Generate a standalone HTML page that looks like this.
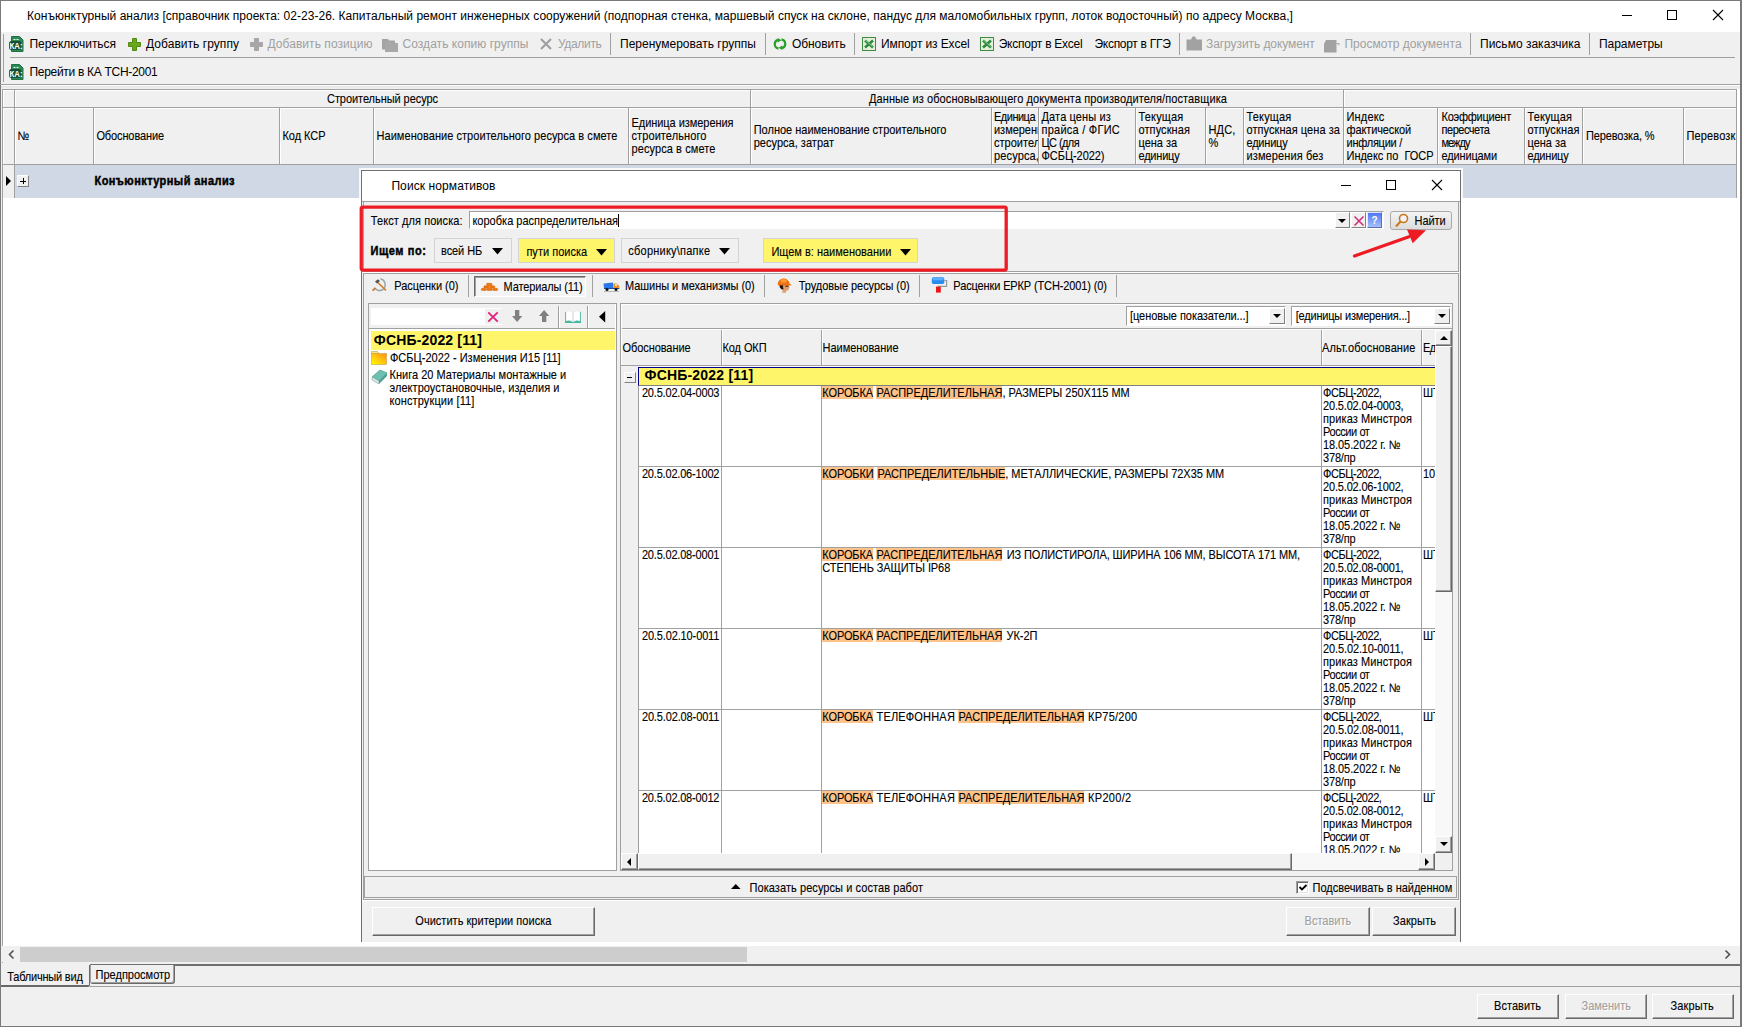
<!DOCTYPE html>
<html lang="ru"><head><meta charset="utf-8"><title>Конъюнктурный анализ</title>
<style>
html,body{margin:0;padding:0}
body{width:1742px;height:1027px;position:relative;overflow:hidden;background:#f0f0f0;font-family:"Liberation Sans",sans-serif;}
.a{position:absolute;box-sizing:border-box}
.t{position:absolute;white-space:pre;line-height:16px;font-size:11px;color:#000}
.m{transform:scaleY(1.1);transform-origin:0 11.81px;-webkit-text-stroke:.1px currentColor}
svg{position:absolute;overflow:visible}
.hl{background:#ffc28c}
.b{-webkit-text-stroke:.4px currentColor}
.d{text-shadow:1px 1px 0 #fff}

</style></head><body>
<div class="a " style="left:0px;top:0px;width:1742px;height:32px;background:#fff;"></div>
<div class="a " style="left:0px;top:0px;width:1742px;height:1px;background:#7a7a7a;"></div>
<div class="a " style="left:0px;top:0px;width:1px;height:1027px;background:#7a7a7a;"></div>
<div class="a " style="left:1740px;top:0px;width:2px;height:1027px;background:#7a7a7a;"></div>
<div class="a " style="left:0px;top:1026px;width:1742px;height:1px;background:#7a7a7a;"></div>
<span class="t " style="left:27px;top:7.84px;font-size:12px;letter-spacing:0.029px;">Конъюнктурный анализ [справочник проекта: 02-23-26. Капитальный ремонт инженерных сооружений (подпорная стенка, маршевый спуск на склоне, пандус для маломобильных групп, лоток водосточный) по адресу Москва,]</span>
<div class="a " style="left:1622px;top:15px;width:10px;height:1px;background:#000;"></div>
<div class="a " style="left:1667px;top:10px;width:10px;height:10px;border:1px solid #000;"></div>
<svg style="left:1713px;top:10px" width="10" height="10"><path d="M0 0L10 10M10 0L0 10" stroke="#000" stroke-width="1.1" fill="none"/></svg>
<div class="a " style="left:3px;top:34px;width:1px;height:48px;background:#a0a0a0;"></div>
<div class="a " style="left:10px;top:57px;width:1725px;height:1px;background:#a0a0a0;"></div>
<div class="a " style="left:0px;top:84px;width:1740px;height:1px;background:#a0a0a0;"></div>
<div class="a " style="left:1px;top:85px;width:1739px;height:1px;background:#fff;"></div>
<div class="a " style="left:1px;top:86px;width:1739px;height:1px;background:#e6e6e6;"></div>
<div class="a " style="left:1px;top:87px;width:1739px;height:1px;background:#ececec;"></div>
<svg style="left:9px;top:36px" width="15" height="16"><path d="M2.5 0.5H10.5L14 4V15.5H2.5Z" fill="#2e8b57" stroke="#207045"/><path d="M4.5 3.5H10.5" stroke="#e8fff0" stroke-width="1" stroke-dasharray="2 1"/><rect x="0" y="5" width="12.5" height="9" rx="2.5" fill="#185030"/><text x="0.5" y="13" font-family="Liberation Sans,sans-serif" font-size="9.5" font-weight="bold" fill="#fff" textLength="13" lengthAdjust="spacingAndGlyphs">КА:</text></svg>
<span class="t " style="left:29.5px;top:36.04px;font-size:12px;letter-spacing:-0.037px;">Переключиться</span>
<svg style="left:127.5px;top:38px" width="13" height="13"><path d="M4.5 0.5h4v4h4v4h-4v4h-4v-4h-4v-4h4z" fill="#6aa61c" stroke="#4d8a10"/></svg>
<span class="t " style="left:146px;top:36.04px;font-size:12px;letter-spacing:0.048px;">Добавить группу</span>
<svg style="left:250px;top:38px" width="13" height="13"><path d="M4.5 0.5h4v4h4v4h-4v4h-4v-4h-4v-4h4z" fill="#a6a6a6" stroke="#a6a6a6"/></svg>
<span class="t " style="left:267.5px;top:36.04px;font-size:12px;color:#a0a0a0;letter-spacing:0.051px;">Добавить позицию</span>
<svg style="left:382px;top:37px" width="16" height="15"><path d="M0 2h6l1 1.5h6v9h-13z" fill="#a4a4a4"/><path d="M3 4.5h6l1 1.5h6v9h-13z" fill="#a8a8a8"/></svg>
<span class="t " style="left:402.5px;top:36.04px;font-size:12px;color:#a0a0a0;letter-spacing:0.046px;">Создать копию группы</span>
<svg style="left:540px;top:38px" width="12" height="12"><path d="M1 1L11 11M11 1L1 11" stroke="#a0a0a0" stroke-width="2.2" fill="none"/></svg>
<span class="t " style="left:558px;top:36.04px;font-size:12px;color:#a0a0a0;letter-spacing:-0.333px;">Удалить</span>
<div class="a " style="left:610px;top:33px;width:1px;height:22px;background:#a0a0a0;"></div>
<span class="t " style="left:620px;top:36.04px;font-size:12px;letter-spacing:0.015px;">Перенумеровать группы</span>
<div class="a " style="left:765px;top:33px;width:1px;height:22px;background:#a0a0a0;"></div>
<svg style="left:773px;top:38px" width="14" height="12" viewBox="0 0 14 12"><path d="M5.5 10.6C0.6 9.6 0.6 3 5 1.9" fill="none" stroke="#2aa02a" stroke-width="2.2"/><path d="M4.6 0L8.6 2.2L4.6 4.6z" fill="#2aa02a"/><path d="M8.5 1.4C13.4 2.4 13.4 9 9 10.1" fill="none" stroke="#2aa02a" stroke-width="2.2"/><path d="M9.4 12L5.4 9.8L9.4 7.4z" fill="#2aa02a"/></svg>
<span class="t " style="left:792px;top:36.04px;font-size:12px;letter-spacing:-0.08px;">Обновить</span>
<div class="a " style="left:854px;top:33px;width:1px;height:22px;background:#a0a0a0;"></div>
<svg style="left:862px;top:37px" width="14" height="14"><rect x="0.5" y="0.5" width="13" height="13" fill="#e4efdc" stroke="#3f8a3f"/><path d="M3 3.5L11 10.5M11 3.5L3 10.5" stroke="#2e8b3e" stroke-width="2.6"/><path d="M3.5 3.2L10.5 9.5" stroke="#bfe6bf" stroke-width=".7"/></svg>
<span class="t " style="left:881px;top:36.04px;font-size:12px;letter-spacing:-0.111px;">Импорт из Excel</span>
<svg style="left:980px;top:37px" width="14" height="14"><rect x="0.5" y="0.5" width="13" height="13" fill="#e4efdc" stroke="#3f8a3f"/><path d="M3 3.5L11 10.5M11 3.5L3 10.5" stroke="#2e8b3e" stroke-width="2.6"/><path d="M3.5 3.2L10.5 9.5" stroke="#bfe6bf" stroke-width=".7"/></svg>
<span class="t " style="left:998.7px;top:36.04px;font-size:12px;letter-spacing:-0.246px;">Экспорт в Excel</span>
<span class="t " style="left:1094.5px;top:36.04px;font-size:12px;letter-spacing:-0.29px;">Экспорт в ГГЭ</span>
<div class="a " style="left:1179px;top:33px;width:1px;height:22px;background:#a0a0a0;"></div>
<svg style="left:1186px;top:36px" width="16" height="15"><path d="M0.5 3.5h4.5l1.5-3h2.5l1.5 3h5.5v11h-15.5z" fill="#a2a2a2"/></svg>
<span class="t " style="left:1206px;top:36.04px;font-size:12px;color:#a0a0a0;letter-spacing:-0.073px;">Загрузить документ</span>
<svg style="left:1324px;top:39.5px" width="17" height="13"><path d="M2 0h10.5v12.5h-12.5v-8.5z" fill="#a2a2a2"/><path d="M12.5 3.5h2.5v2" stroke="#a2a2a2" fill="none"/></svg>
<span class="t " style="left:1344.4px;top:36.04px;font-size:12px;color:#a0a0a0;letter-spacing:0.03px;">Просмотр документа</span>
<div class="a " style="left:1470px;top:33px;width:1px;height:22px;background:#a0a0a0;"></div>
<span class="t " style="left:1480px;top:36.04px;font-size:12px;letter-spacing:0.012px;">Письмо заказчика</span>
<div class="a " style="left:1589px;top:33px;width:1px;height:22px;background:#a0a0a0;"></div>
<span class="t " style="left:1599px;top:36.04px;font-size:12px;letter-spacing:-0.041px;">Параметры</span>
<svg style="left:9px;top:64px" width="15" height="16"><path d="M2.5 0.5H10.5L14 4V15.5H2.5Z" fill="#2e8b57" stroke="#207045"/><path d="M4.5 3.5H10.5" stroke="#e8fff0" stroke-width="1" stroke-dasharray="2 1"/><rect x="0" y="5" width="12.5" height="9" rx="2.5" fill="#185030"/><text x="0.5" y="13" font-family="Liberation Sans,sans-serif" font-size="9.5" font-weight="bold" fill="#fff" textLength="13" lengthAdjust="spacingAndGlyphs">КА:</text></svg>
<span class="t " style="left:29.5px;top:64.14px;font-size:12px;letter-spacing:-0.299px;">Перейти в КА ТСН-2001</span>
<div class="a " style="left:2px;top:89px;width:1738px;height:857px;background:#fff;"></div>
<div class="a " style="left:2px;top:89px;width:1735px;height:76px;background:#f0f0f0;"></div>
<div class="a " style="left:3px;top:90px;width:1733px;height:1px;background:#fff;"></div>
<div class="a " style="left:3px;top:108px;width:1733px;height:1px;background:#fff;"></div>
<div class="a " style="left:3px;top:90px;width:1px;height:75px;background:#fff;"></div>
<div class="a " style="left:15px;top:90px;width:1px;height:75px;background:#fff;"></div>
<div class="a " style="left:751px;top:90px;width:1px;height:74px;background:#fff;"></div>
<div class="a " style="left:1344px;top:90px;width:1px;height:74px;background:#fff;"></div>
<div class="a " style="left:94px;top:108px;width:1px;height:56px;background:#fff;"></div>
<div class="a " style="left:280px;top:108px;width:1px;height:56px;background:#fff;"></div>
<div class="a " style="left:374px;top:108px;width:1px;height:56px;background:#fff;"></div>
<div class="a " style="left:629px;top:108px;width:1px;height:56px;background:#fff;"></div>
<div class="a " style="left:992px;top:108px;width:1px;height:56px;background:#fff;"></div>
<div class="a " style="left:1039px;top:108px;width:1px;height:56px;background:#fff;"></div>
<div class="a " style="left:1136px;top:108px;width:1px;height:56px;background:#fff;"></div>
<div class="a " style="left:1206px;top:108px;width:1px;height:56px;background:#fff;"></div>
<div class="a " style="left:1244px;top:108px;width:1px;height:56px;background:#fff;"></div>
<div class="a " style="left:1438px;top:108px;width:1px;height:56px;background:#fff;"></div>
<div class="a " style="left:1525px;top:108px;width:1px;height:56px;background:#fff;"></div>
<div class="a " style="left:1583px;top:108px;width:1px;height:56px;background:#fff;"></div>
<div class="a " style="left:1684px;top:108px;width:1px;height:56px;background:#fff;"></div>
<div class="a " style="left:2px;top:89px;width:1735px;height:1px;background:#a0a0a0;"></div>
<div class="a " style="left:2px;top:89px;width:1px;height:874px;background:#a0a0a0;"></div>
<div class="a " style="left:3px;top:107px;width:1733px;height:1px;background:#a0a0a0;"></div>
<div class="a " style="left:3px;top:164px;width:1733px;height:1px;background:#a0a0a0;"></div>
<div class="a " style="left:14px;top:90px;width:1px;height:108px;background:#a0a0a0;"></div>
<div class="a " style="left:750px;top:90px;width:1px;height:75px;background:#a0a0a0;"></div>
<div class="a " style="left:1343px;top:90px;width:1px;height:75px;background:#a0a0a0;"></div>
<div class="a " style="left:93px;top:108px;width:1px;height:57px;background:#a0a0a0;"></div>
<div class="a " style="left:279px;top:108px;width:1px;height:57px;background:#a0a0a0;"></div>
<div class="a " style="left:373px;top:108px;width:1px;height:57px;background:#a0a0a0;"></div>
<div class="a " style="left:628px;top:108px;width:1px;height:57px;background:#a0a0a0;"></div>
<div class="a " style="left:991px;top:108px;width:1px;height:57px;background:#a0a0a0;"></div>
<div class="a " style="left:1038px;top:108px;width:1px;height:57px;background:#a0a0a0;"></div>
<div class="a " style="left:1135px;top:108px;width:1px;height:57px;background:#a0a0a0;"></div>
<div class="a " style="left:1205px;top:108px;width:1px;height:57px;background:#a0a0a0;"></div>
<div class="a " style="left:1243px;top:108px;width:1px;height:57px;background:#a0a0a0;"></div>
<div class="a " style="left:1437px;top:108px;width:1px;height:57px;background:#a0a0a0;"></div>
<div class="a " style="left:1524px;top:108px;width:1px;height:57px;background:#a0a0a0;"></div>
<div class="a " style="left:1582px;top:108px;width:1px;height:57px;background:#a0a0a0;"></div>
<div class="a " style="left:1683px;top:108px;width:1px;height:57px;background:#a0a0a0;"></div>
<div class="a " style="left:1736px;top:89px;width:1px;height:109px;background:#a0a0a0;"></div>
<div class="a " style="left:15px;top:165px;width:1721px;height:33px;background:#d0d7e5;"></div>
<div class="a " style="left:3px;top:165px;width:11px;height:33px;background:#f0f0f0;"></div>
<span class="t m" style="left:327px;top:91.19px;letter-spacing:-0.058px;">Строительный ресурс</span>
<span class="t m" style="left:869px;top:91.19px;letter-spacing:0.096px;">Данные из обосновывающего документа производителя/поставщика</span>
<span class="t m" style="left:17.5px;top:128.19px;letter-spacing:-0.812px;">№</span>
<span class="t m" style="left:96.4px;top:128.19px;letter-spacing:-0.113px;">Обоснование</span>
<span class="t m" style="left:282.5px;top:128.19px;letter-spacing:-0.047px;">Код КСР</span>
<span class="t m" style="left:376.5px;top:128.19px;letter-spacing:0.051px;">Наименование строительного ресурса в смете</span>
<span class="t m" style="left:631.5px;top:115.19px;letter-spacing:-0.051px;">Единица измерения</span>
<span class="t m" style="left:631.5px;top:128.19px;letter-spacing:0.09px;">строительного</span>
<span class="t m" style="left:631.5px;top:141.19px;letter-spacing:0.09px;">ресурса в смете</span>
<span class="t m" style="left:753.7px;top:122.19px;letter-spacing:-0.004px;">Полное наименование строительного</span>
<span class="t m" style="left:753.7px;top:135.19px;letter-spacing:0.023px;">ресурса, затрат</span>
<div class="a" style="left:992px;top:108px;width:46px;height:56px;overflow:hidden">
<span class="t m" style="left:2px;top:1.19px;letter-spacing:-0.507px;">Единица</span>
<span class="t m" style="left:2px;top:14.19px;letter-spacing:-0.031px;">измерения</span>
<span class="t m" style="left:2px;top:27.19px;letter-spacing:0.013px;">строительного</span>
<span class="t m" style="left:2px;top:40.19px;letter-spacing:0.137px;">ресурса,</span>
</div>
<span class="t m" style="left:1041.5px;top:109.19px;letter-spacing:0.13px;">Дата цены из</span>
<span class="t m" style="left:1041.5px;top:122.19px;letter-spacing:0.246px;">прайса / ФГИС</span>
<span class="t m" style="left:1041.5px;top:135.19px;letter-spacing:-0.585px;">ЦС (для</span>
<span class="t m" style="left:1041.5px;top:148.19px;letter-spacing:-0.047px;">ФСБЦ-2022)</span>
<span class="t m" style="left:1138.5px;top:109.19px;letter-spacing:0.174px;">Текущая</span>
<span class="t m" style="left:1138.5px;top:122.19px;letter-spacing:0.087px;">отпускная</span>
<span class="t m" style="left:1138.5px;top:135.19px;letter-spacing:-0.031px;">цена за</span>
<span class="t m" style="left:1138.5px;top:148.19px;letter-spacing:-0.21px;">единицу</span>
<span class="t m" style="left:1208.5px;top:122.19px;letter-spacing:0.148px;">НДС,</span>
<span class="t m" style="left:1208.5px;top:135.19px;letter-spacing:-0.281px;">%</span>
<span class="t m" style="left:1246.5px;top:109.19px;letter-spacing:0.174px;">Текущая</span>
<span class="t m" style="left:1246.5px;top:122.19px;letter-spacing:0.061px;">отпускная цена за</span>
<span class="t m" style="left:1246.5px;top:135.19px;letter-spacing:-0.21px;">единицу</span>
<span class="t m" style="left:1246.5px;top:148.19px;letter-spacing:0.12px;">измерения без</span>
<span class="t m" style="left:1346.5px;top:109.19px;letter-spacing:0.174px;">Индекс</span>
<span class="t m" style="left:1346.5px;top:122.19px;letter-spacing:-0.122px;">фактической</span>
<span class="t m" style="left:1346.5px;top:135.19px;letter-spacing:-0.261px;">инфляции /</span>
<span class="t m" style="left:1346.5px;top:148.19px;letter-spacing:-0.025px;">Индекс по  ГОСР</span>
<span class="t m" style="left:1441.5px;top:109.19px;letter-spacing:-0.233px;">Коэффициент</span>
<span class="t m" style="left:1441.5px;top:122.19px;letter-spacing:-0.467px;">пересчета</span>
<span class="t m" style="left:1441.5px;top:135.19px;letter-spacing:-0.969px;">между</span>
<span class="t m" style="left:1441.5px;top:148.19px;letter-spacing:-0.144px;">единицами</span>
<span class="t m" style="left:1527.5px;top:109.19px;letter-spacing:0.103px;">Текущая</span>
<span class="t m" style="left:1527.5px;top:122.19px;letter-spacing:0.142px;">отпускная</span>
<span class="t m" style="left:1527.5px;top:135.19px;letter-spacing:-0.031px;">цена за</span>
<span class="t m" style="left:1527.5px;top:148.19px;letter-spacing:-0.21px;">единицу</span>
<span class="t m" style="left:1586px;top:128.19px;letter-spacing:-0.133px;">Перевозка, %</span>
<div class="a" style="left:1684px;top:108px;width:52px;height:56px;overflow:hidden">
<span class="t m" style="left:2.5px;top:20.19px;letter-spacing:0.144px;">Перевозка</span>
</div>
<svg style="left:6px;top:176px" width="6" height="10"><path d="M0 0L5 5L0 10z" fill="#000"/></svg>
<div class="a " style="left:17px;top:175px;width:12px;height:12px;background:#f0f0f0;border:1px solid;border-color:#fff #808080 #808080 #fff;"></div>
<div class="a " style="left:20px;top:180.5px;width:6px;height:1px;background:#000;"></div>
<div class="a " style="left:22.5px;top:178px;width:1px;height:6px;background:#000;"></div>
<span class="t m b" style="left:94.5px;top:173.19px;font-weight:bold;letter-spacing:0.427px;">Конъюнктурный анализ</span>
<div class="a " style="left:2px;top:946px;width:1738px;height:16px;background:#f0f0f0;"></div>
<div class="a " style="left:20px;top:947px;width:727px;height:15px;background:#cdcdcd;"></div>
<svg style="left:8px;top:950px" width="7" height="9"><path d="M5.5 0.5L1.5 4.5L5.5 8.5" stroke="#505050" stroke-width="1.6" fill="none"/></svg>
<svg style="left:1724px;top:950px" width="7" height="9"><path d="M1.5 0.5L5.5 4.5L1.5 8.5" stroke="#505050" stroke-width="1.6" fill="none"/></svg>
<div class="a " style="left:90px;top:964px;width:1650px;height:2px;background:#707070;"></div>
<div class="a " style="left:90px;top:986px;width:1650px;height:1px;background:#a0a0a0;"></div>
<div class="a " style="left:1px;top:965px;width:89px;height:22px;background:#f0f0f0;border-right:1px solid #696969;border-bottom:2px solid #696969;border-radius:0 0 2px 0;"></div>
<span class="t m" style="left:7.2px;top:968.59px;letter-spacing:-0.195px;">Табличный вид</span>
<div class="a " style="left:90px;top:965px;width:85px;height:19px;background:#f0f0f0;border:1px solid #696969;border-top:none;border-left-color:#a0a0a0;border-radius:0 0 3px 3px;box-shadow:inset -1px -1px 0 #a0a0a0;"></div>
<span class="t m" style="left:95.6px;top:967.19px;letter-spacing:-0.001px;">Предпросмотр</span>
<div class="a " style="left:1477px;top:994px;width:82px;height:25px;background:#f0f0f0;border:1px solid;border-color:#fff #696969 #696969 #fff;box-shadow:inset -1px -1px 0 #a0a0a0;"></div>
<span class="t m" style="left:1494px;top:998.19px;letter-spacing:0.045px;">Вставить</span>
<div class="a " style="left:1565px;top:994px;width:82px;height:25px;background:#f0f0f0;border:1px solid;border-color:#fff #696969 #696969 #fff;box-shadow:inset -1px -1px 0 #a0a0a0;"></div>
<span class="t m d" style="left:1581.5px;top:998.19px;color:#a0a0a0;letter-spacing:0.008px;">Заменить</span>
<div class="a " style="left:1652px;top:994px;width:82px;height:25px;background:#f0f0f0;border:1px solid;border-color:#fff #696969 #696969 #fff;box-shadow:inset -1px -1px 0 #a0a0a0;"></div>
<span class="t m" style="left:1670.5px;top:998.19px;letter-spacing:0.161px;">Закрыть</span>
<div class="a " style="left:359px;top:168px;width:1104px;height:775px;background:#fff;opacity:.85;"></div>
<div class="a " style="left:361px;top:170px;width:1100px;height:772px;background:#f0f0f0;border:1px solid #707070;border-bottom:none;"></div>
<div class="a " style="left:362px;top:171px;width:1098px;height:30px;background:#fff;"></div>
<span class="t " style="left:391.4px;top:177.54px;font-size:12px;letter-spacing:0.093px;">Поиск нормативов</span>
<div class="a " style="left:1341px;top:185px;width:10px;height:1px;background:#000;"></div>
<div class="a " style="left:1386px;top:180px;width:10px;height:10px;border:1px solid #000;"></div>
<svg style="left:1432px;top:180px" width="10" height="10"><path d="M0 0L10 10M10 0L0 10" stroke="#000" stroke-width="1.1" fill="none"/></svg>
<div class="a " style="left:362px;top:201px;width:1098px;height:1px;background:#a0a0a0;"></div>
<div class="a " style="left:363px;top:202px;width:1096px;height:70px;border:1px solid #a0a0a0;border-top:none;"></div>
<div class="a " style="left:363px;top:272px;width:1096px;height:1px;background:#fff;"></div>
<span class="t m" style="left:370.8px;top:213.19px;letter-spacing:0.074px;">Текст для поиска:</span>
<div class="a " style="left:469px;top:211px;width:915px;height:18px;background:#fff;border:1px solid;border-color:#a0a0a0 #fff #fff #a0a0a0;"></div>
<span class="t m" style="left:472.4px;top:213.19px;letter-spacing:0.016px;">коробка распределительная</span>
<div class="a " style="left:618px;top:214px;width:1px;height:13px;background:#000;"></div>
<div class="a " style="left:1335px;top:212px;width:15px;height:16px;background:#f0f0f0;border:1px solid;border-color:#fff #808080 #808080 #fff;"></div>
<svg style="left:1338px;top:219px" width="8" height="4"><path d="M0 0h8l-4 4z" fill="#000"/></svg>
<div class="a " style="left:1351px;top:212px;width:15px;height:16px;background:#f0f0f0;border:1px solid;border-color:#fff #808080 #808080 #fff;"></div>
<svg style="left:1354px;top:216px" width="10" height="10"><path d="M0.5 0.5L9.5 9.5M9.5 0.5L0.5 9.5" stroke="#d0307a" stroke-width="1.6" fill="none"/></svg>
<div class="a " style="left:1367px;top:212px;width:15px;height:16px;background:linear-gradient(180deg,#4f77f5,#a9c0fa);border:1px solid;border-color:#dfe8ff #5a6fb0 #5a6fb0 #dfe8ff;"></div>
<span class="t " style="left:1371.5px;top:213.03px;font-size:10px;font-weight:bold;color:#fff;">?</span>
<div class="a " style="left:1390px;top:211px;width:62px;height:19px;background:linear-gradient(180deg,#f4f4f4,#dcdcdc);border:1px solid #a9a9a9;border-radius:3px;"></div>
<svg style="left:1395px;top:213px" width="14" height="15"><circle cx="8.5" cy="5.5" r="4" fill="#f4f4ff" stroke="#c87818" stroke-width="1.6"/><path d="M5.5 8.5L1 13.5" stroke="#c87818" stroke-width="2"/></svg>
<span class="t m" style="left:1414.5px;top:213.19px;letter-spacing:-0.058px;">Найти</span>
<span class="t m b" style="left:370.4px;top:243.19px;font-weight:bold;letter-spacing:0.589px;">Ищем по:</span>
<div class="a " style="left:434px;top:238px;width:78px;height:25px;background:#f0f0f0;border:1px solid #d4d4d4;"></div>
<span class="t m" style="left:441px;top:243.19px;letter-spacing:-0.072px;">всей НБ</span>
<svg style="left:492.3px;top:248px" width="11" height="7"><path d="M0 0h11l-5.5 6.5z" fill="#000"/></svg>
<div class="a " style="left:518px;top:238px;width:97px;height:25px;background:#fff56a;border:1px solid #d4d4d4;"></div>
<span class="t m" style="left:526.4px;top:244.19px;letter-spacing:0.019px;">пути поиска</span>
<svg style="left:596.2px;top:249px" width="11" height="7"><path d="M0 0h11l-5.5 6.5z" fill="#000"/></svg>
<div class="a " style="left:621px;top:238px;width:118px;height:25px;background:#f0f0f0;border:1px solid #d4d4d4;"></div>
<span class="t m" style="left:628.3px;top:243.19px;letter-spacing:0.225px;">сборнику\папке</span>
<svg style="left:718.8px;top:248px" width="11" height="7"><path d="M0 0h11l-5.5 6.5z" fill="#000"/></svg>
<div class="a " style="left:763px;top:238px;width:155px;height:25px;background:#fff56a;border:1px solid #d4d4d4;"></div>
<span class="t m" style="left:771.4px;top:244.19px;letter-spacing:-0.002px;">Ищем в: наименовании</span>
<svg style="left:899.8px;top:249px" width="11" height="7"><path d="M0 0h11l-5.5 6.5z" fill="#000"/></svg>
<svg style="left:355px;top:200px" width="660" height="80"><rect x="6.25" y="7.05" width="644.95" height="63" rx="1.5" fill="none" stroke="#ed1c24" stroke-width="3.3"/></svg>
<svg style="left:1340px;top:225px" width="100" height="40"><path d="M14.5 31L69 11.7" stroke="#ed1c24" stroke-width="3.2" stroke-linecap="round"/><path d="M86 5.2L67 4.5L72.7 18.2z" fill="#ed1c24"/></svg>
<div class="a " style="left:363px;top:273px;width:1096px;height:26px;border:1px solid #a0a0a0;border-bottom:none;"></div>
<span class="t m" style="left:394.3px;top:278.19px;letter-spacing:-0.027px;">Расценки (0)</span>
<div class="a " style="left:468px;top:275px;width:1px;height:22px;background:#a0a0a0;"></div>
<div class="a " style="left:474px;top:275.5px;width:112px;height:21px;background:#f4f4f4;border:1px solid;border-color:#696969 #fff #fff #696969;box-shadow:inset 1px 1px 0 #a0a0a0;"></div>
<span class="t m" style="left:503.6px;top:279.19px;letter-spacing:-0.129px;">Материалы (11)</span>
<div class="a " style="left:591.5px;top:275px;width:1px;height:22px;background:#a0a0a0;"></div>
<span class="t m" style="left:625px;top:278.19px;letter-spacing:-0.049px;">Машины и механизмы (0)</span>
<div class="a " style="left:764px;top:275px;width:1px;height:22px;background:#a0a0a0;"></div>
<span class="t m" style="left:798.7px;top:278.19px;letter-spacing:-0.041px;">Трудовые ресурсы (0)</span>
<div class="a " style="left:919px;top:275px;width:1px;height:22px;background:#a0a0a0;"></div>
<span class="t m" style="left:953.3px;top:278.19px;letter-spacing:-0.126px;">Расценки ЕРКР (ТСН-2001) (0)</span>
<div class="a " style="left:1116px;top:275px;width:1px;height:22px;background:#a0a0a0;"></div>
<div class="a " style="left:363px;top:299px;width:1px;height:601px;background:#a0a0a0;"></div>
<div class="a " style="left:1458px;top:299px;width:1px;height:601px;background:#a0a0a0;"></div>
<div class="a " style="left:368px;top:303px;width:249px;height:568px;background:#fff;border:1px solid #a0a0a0;"></div>
<div class="a " style="left:369px;top:304px;width:246px;height:24px;background:#f0f0f0;"></div>
<div class="a " style="left:369px;top:328px;width:246px;height:1px;background:#a0a0a0;"></div>
<div class="a " style="left:371px;top:308px;width:131px;height:17px;background:#fff;"></div>
<div class="a " style="left:485px;top:309px;width:17px;height:15px;background:#f0f0f0;"></div>
<svg style="left:488px;top:312px" width="10" height="10"><path d="M0.3 0.3L9.7 9.7M9.7 0.3L0.3 9.7" stroke="#e0207a" stroke-width="1.8" fill="none"/></svg>
<svg style="left:512px;top:310px" width="10" height="12"><path d="M3 0h4.3v6h3l-5.2 6l-5.1-6h3z" fill="#808080"/></svg>
<svg style="left:539px;top:310px" width="10" height="12"><path d="M3 12h4.3v-6h3l-5.2-6l-5.1 6h3z" fill="#808080"/></svg>
<div class="a " style="left:558px;top:306px;width:1px;height:22px;background:#a0a0a0;"></div>
<div class="a " style="left:559px;top:306px;width:1px;height:22px;background:#fff;"></div>
<svg style="left:565px;top:310px" width="16" height="13"><rect x="0" y="2" width="16" height="11" fill="#3fb8a0"/><path d="M1 1.5C3.5 0.3 6 0.8 8 2.5C10 0.8 12.500 0.3 15 1.5V11C12.500 10 10 10.500 8 12C6 10.500 3.500 10 1 11z" fill="#fff" stroke="#d8dcdc" stroke-width=".5"/><path d="M8 2.500V12" stroke="#c0c8c8" stroke-width=".8"/></svg>
<div class="a " style="left:587px;top:306px;width:1px;height:22px;background:#a0a0a0;"></div>
<div class="a " style="left:588px;top:306px;width:1px;height:22px;background:#fff;"></div>
<svg style="left:599px;top:310.500px" width="7" height="12"><path d="M6.2 0v11.500l-6.2-5.750z" fill="#000"/></svg>
<div class="a " style="left:371px;top:331px;width:244px;height:19px;background:#fff56a;"></div>
<span class="t " style="left:373.8px;top:332.15px;font-size:14px;font-weight:bold;letter-spacing:0.16px;">ФСНБ-2022 [11]</span>
<svg style="left:371px;top:351px" width="16" height="14"><defs><linearGradient id="fg" x1="0" y1="1" x2="1" y2="0"><stop offset="0" stop-color="#ffff00"/><stop offset="1" stop-color="#ff8c1a"/></linearGradient></defs><path d="M0.5 0.5h6l1.5 2h-7.5z" fill="#ffe680" stroke="#b0a060" stroke-width=".6"/><rect x="0.5" y="2.5" width="15" height="11" fill="url(#fg)" stroke="#c8a040" stroke-width=".6"/></svg>
<span class="t m" style="left:390px;top:350.19px;letter-spacing:0.011px;">ФСБЦ-2022 - Изменения И15 [11]</span>
<svg style="left:370px;top:368px" width="18" height="17"><path d="M2 9L10 2L17 5L9 13z" fill="#6fbfb0" stroke="#4a9a8c" stroke-width=".7"/><path d="M2 9L9 13L9 16L2 12z" fill="#d8e8e4" stroke="#8aa" stroke-width=".6"/><path d="M9 13L17 5L17 8L9 16z" fill="#4f9f90"/></svg>
<span class="t m" style="left:389.5px;top:367.19px;letter-spacing:0.014px;">Книга 20 Материалы монтажные и</span>
<span class="t m" style="left:389.5px;top:380.19px;letter-spacing:0.051px;">электроустановочные, изделия и</span>
<span class="t m" style="left:389.5px;top:393.19px;letter-spacing:0.115px;">конструкции [11]</span>
<div class="a " style="left:620px;top:303px;width:833px;height:568px;background:#fff;border:1px solid #a0a0a0;"></div>
<div class="a " style="left:621px;top:304px;width:831px;height:25px;background:#f0f0f0;"></div>
<div class="a " style="left:621px;top:304px;width:831px;height:1px;background:#fff;"></div>
<div class="a " style="left:621px;top:304px;width:1px;height:24px;background:#fff;"></div>
<div class="a " style="left:622px;top:328px;width:830px;height:1px;background:#a0a0a0;"></div>
<div class="a " style="left:1126px;top:306px;width:160px;height:20px;background:#fff;border:1px solid;border-color:#a0a0a0 #fff #fff #a0a0a0;"></div>
<div class="a " style="left:1269px;top:308px;width:16px;height:16px;background:#f0f0f0;border:1px solid;border-color:#fff #808080 #808080 #fff;"></div>
<svg style="left:1273px;top:314px" width="8" height="4"><path d="M0 0h8l-4 4z" fill="#000"/></svg>
<span class="t m" style="left:1130px;top:308.19px;letter-spacing:-0.06px;">[ценовые показатели...]</span>
<div class="a " style="left:1291px;top:306px;width:160px;height:20px;background:#fff;border:1px solid;border-color:#a0a0a0 #fff #fff #a0a0a0;"></div>
<div class="a " style="left:1434px;top:308px;width:16px;height:16px;background:#f0f0f0;border:1px solid;border-color:#fff #808080 #808080 #fff;"></div>
<svg style="left:1438px;top:314px" width="8" height="4"><path d="M0 0h8l-4 4z" fill="#000"/></svg>
<span class="t m" style="left:1295.7px;top:308.19px;letter-spacing:-0.19px;">[единицы измерения...]</span>
<div class="a " style="left:621px;top:329px;width:814px;height:37px;background:#f0f0f0;"></div>
<div class="a " style="left:621px;top:365px;width:814px;height:1px;background:#a0a0a0;"></div>
<div class="a " style="left:621px;top:329px;width:814px;height:1px;background:#fff;"></div>
<div class="a " style="left:621px;top:329px;width:1px;height:36px;background:#fff;"></div>
<div class="a " style="left:722px;top:330px;width:1px;height:35px;background:#fff;"></div>
<div class="a " style="left:822px;top:330px;width:1px;height:35px;background:#fff;"></div>
<div class="a " style="left:1322px;top:330px;width:1px;height:35px;background:#fff;"></div>
<div class="a " style="left:1422px;top:330px;width:1px;height:35px;background:#fff;"></div>
<div class="a " style="left:721px;top:330px;width:1px;height:35px;background:#a0a0a0;"></div>
<div class="a " style="left:821px;top:330px;width:1px;height:35px;background:#a0a0a0;"></div>
<div class="a " style="left:1321px;top:330px;width:1px;height:35px;background:#a0a0a0;"></div>
<div class="a " style="left:1421px;top:330px;width:1px;height:35px;background:#a0a0a0;"></div>
<span class="t m" style="left:622.5px;top:340.19px;letter-spacing:-0.077px;">Обоснование</span>
<span class="t m" style="left:722.5px;top:340.19px;letter-spacing:-0.092px;">Код ОКП</span>
<span class="t m" style="left:822.5px;top:340.19px;letter-spacing:-0.022px;">Наименование</span>
<span class="t m" style="left:1322px;top:340.19px;letter-spacing:0.1px;">Альт.обоснование</span>
<div class="a" style="left:1422px;top:330px;width:13px;height:35px;overflow:hidden">
<span class="t m" style="left:1px;top:10.19px;letter-spacing:-0.518px;">Ед.изм.</span>
</div>
<div class="a " style="left:621px;top:366px;width:17px;height:487px;background:#f0f0f0;"></div>
<div class="a " style="left:638px;top:367px;width:798px;height:19px;background:#fff56a;border-top:1px solid #00008b;border-left:1px solid #00008b;border-bottom:1px solid #808080;"></div>
<div class="a " style="left:624px;top:372px;width:12px;height:11px;background:#f0f0f0;border:1px solid;border-color:#fff #808080 #808080 #fff;"></div>
<div class="a " style="left:627px;top:377px;width:5px;height:1px;background:#000;"></div>
<span class="t " style="left:644.5px;top:367.15px;font-size:14px;font-weight:bold;letter-spacing:0.196px;">ФСНБ-2022 [11]</span>
<div class="a" style="left:621px;top:366px;width:814px;height:487px;overflow:hidden">
<span class="t m" style="left:20.899999999999977px;top:19.19px;letter-spacing:-0.183px;">20.5.02.04-0003</span>
<div class="a " style="left:201px;top:20px;width:51px;height:13px;background:#ffc38a;"></div>
<span class="t m" style="left:201.29999999999995px;top:19.19px;letter-spacing:-0.11px;">КОРОБКА</span>
<div class="a " style="left:255px;top:20px;width:126px;height:13px;background:#ffc38a;"></div>
<span class="t m" style="left:255.5px;top:19.19px;letter-spacing:0.002px;">РАСПРЕДЕЛИТЕЛЬНАЯ</span>
<span class="t m" style="left:381.4px;top:19.19px;letter-spacing:-0.026px;">, РАЗМЕРЫ 250Х115 ММ</span>
<span class="t m" style="left:702px;top:19.19px;letter-spacing:-0.436px;">ФСБЦ-2022,</span>
<span class="t m" style="left:702px;top:32.19px;letter-spacing:-0.168px;">20.5.02.04-0003,</span>
<span class="t m" style="left:702px;top:45.19px;letter-spacing:0.101px;">приказ Минстроя</span>
<span class="t m" style="left:702px;top:58.19px;letter-spacing:-0.415px;">России от</span>
<span class="t m" style="left:702px;top:71.19px;letter-spacing:-0.08px;">18.05.2022 г. №</span>
<span class="t m" style="left:702px;top:84.19px;letter-spacing:-0.164px;">378/пр</span>
<span class="t m" style="left:802px;top:19.19px;">ШТ.</span>
<div class="a " style="left:17px;top:100px;width:798px;height:1px;background:#a0a0a0;"></div>
<span class="t m" style="left:20.899999999999977px;top:100.19px;letter-spacing:-0.183px;">20.5.02.06-1002</span>
<div class="a " style="left:201px;top:101px;width:52px;height:13px;background:#ffc38a;"></div>
<span class="t m" style="left:201.29999999999995px;top:100.19px;letter-spacing:-0.119px;">КОРОБКИ</span>
<div class="a " style="left:256px;top:101px;width:128px;height:13px;background:#ffc38a;"></div>
<span class="t m" style="left:256.4px;top:100.19px;letter-spacing:0.014px;">РАСПРЕДЕЛИТЕЛЬНЫЕ</span>
<span class="t m" style="left:384.29999999999995px;top:100.19px;letter-spacing:-0.02px;">, МЕТАЛЛИЧЕСКИЕ, РАЗМЕРЫ 72Х35 ММ</span>
<span class="t m" style="left:702px;top:100.19px;letter-spacing:-0.436px;">ФСБЦ-2022,</span>
<span class="t m" style="left:702px;top:113.19px;letter-spacing:-0.168px;">20.5.02.06-1002,</span>
<span class="t m" style="left:702px;top:126.19px;letter-spacing:0.101px;">приказ Минстроя</span>
<span class="t m" style="left:702px;top:139.19px;letter-spacing:-0.415px;">России от</span>
<span class="t m" style="left:702px;top:152.19px;letter-spacing:-0.08px;">18.05.2022 г. №</span>
<span class="t m" style="left:702px;top:165.19px;letter-spacing:-0.164px;">378/пр</span>
<span class="t m" style="left:802px;top:100.19px;">1000 ШТ</span>
<div class="a " style="left:17px;top:181px;width:798px;height:1px;background:#a0a0a0;"></div>
<span class="t m" style="left:20.899999999999977px;top:181.19px;letter-spacing:-0.183px;">20.5.02.08-0001</span>
<div class="a " style="left:201px;top:182px;width:51px;height:13px;background:#ffc38a;"></div>
<span class="t m" style="left:201.29999999999995px;top:181.19px;letter-spacing:-0.11px;">КОРОБКА</span>
<div class="a " style="left:255px;top:182px;width:126px;height:13px;background:#ffc38a;"></div>
<span class="t m" style="left:255.5px;top:181.19px;letter-spacing:0.002px;">РАСПРЕДЕЛИТЕЛЬНАЯ</span>
<span class="t m" style="left:385.70000000000005px;top:181.19px;letter-spacing:-0.099px;">ИЗ ПОЛИСТИРОЛА, ШИРИНА 106 ММ, ВЫСОТА 171 ММ,</span>
<span class="t m" style="left:201.29999999999995px;top:194.19px;letter-spacing:-0.082px;">СТЕПЕНЬ ЗАЩИТЫ IP68</span>
<span class="t m" style="left:702px;top:181.19px;letter-spacing:-0.436px;">ФСБЦ-2022,</span>
<span class="t m" style="left:702px;top:194.19px;letter-spacing:-0.168px;">20.5.02.08-0001,</span>
<span class="t m" style="left:702px;top:207.19px;letter-spacing:0.101px;">приказ Минстроя</span>
<span class="t m" style="left:702px;top:220.19px;letter-spacing:-0.415px;">России от</span>
<span class="t m" style="left:702px;top:233.19px;letter-spacing:-0.08px;">18.05.2022 г. №</span>
<span class="t m" style="left:702px;top:246.19px;letter-spacing:-0.164px;">378/пр</span>
<span class="t m" style="left:802px;top:181.19px;">ШТ.</span>
<div class="a " style="left:17px;top:262px;width:798px;height:1px;background:#a0a0a0;"></div>
<span class="t m" style="left:20.899999999999977px;top:262.19px;letter-spacing:-0.128px;">20.5.02.10-0011</span>
<div class="a " style="left:201px;top:263px;width:51px;height:13px;background:#ffc38a;"></div>
<span class="t m" style="left:201.29999999999995px;top:262.19px;letter-spacing:-0.11px;">КОРОБКА</span>
<div class="a " style="left:255px;top:263px;width:126px;height:13px;background:#ffc38a;"></div>
<span class="t m" style="left:255.5px;top:262.19px;letter-spacing:0.002px;">РАСПРЕДЕЛИТЕЛЬНАЯ</span>
<span class="t m" style="left:385.5px;top:262.19px;letter-spacing:-0.019px;">УК-2П</span>
<span class="t m" style="left:702px;top:262.19px;letter-spacing:-0.436px;">ФСБЦ-2022,</span>
<span class="t m" style="left:702px;top:275.19px;letter-spacing:-0.117px;">20.5.02.10-0011,</span>
<span class="t m" style="left:702px;top:288.19px;letter-spacing:0.101px;">приказ Минстроя</span>
<span class="t m" style="left:702px;top:301.19px;letter-spacing:-0.415px;">России от</span>
<span class="t m" style="left:702px;top:314.19px;letter-spacing:-0.08px;">18.05.2022 г. №</span>
<span class="t m" style="left:702px;top:327.19px;letter-spacing:-0.164px;">378/пр</span>
<span class="t m" style="left:802px;top:262.19px;">ШТ.</span>
<div class="a " style="left:17px;top:343px;width:798px;height:1px;background:#a0a0a0;"></div>
<span class="t m" style="left:20.899999999999977px;top:343.19px;letter-spacing:-0.128px;">20.5.02.08-0011</span>
<div class="a " style="left:201px;top:344px;width:51px;height:13px;background:#ffc38a;"></div>
<span class="t m" style="left:201.29999999999995px;top:343.19px;letter-spacing:-0.11px;">КОРОБКА</span>
<span class="t m" style="left:255.5px;top:343.19px;letter-spacing:0.18px;">ТЕЛЕФОННАЯ</span>
<div class="a " style="left:337px;top:344px;width:126px;height:13px;background:#ffc38a;"></div>
<span class="t m" style="left:337.5px;top:343.19px;letter-spacing:0.002px;">РАСПРЕДЕЛИТЕЛЬНАЯ</span>
<span class="t m" style="left:467px;top:343.19px;letter-spacing:0.264px;">КР75/200</span>
<span class="t m" style="left:702px;top:343.19px;letter-spacing:-0.436px;">ФСБЦ-2022,</span>
<span class="t m" style="left:702px;top:356.19px;letter-spacing:-0.117px;">20.5.02.08-0011,</span>
<span class="t m" style="left:702px;top:369.19px;letter-spacing:0.101px;">приказ Минстроя</span>
<span class="t m" style="left:702px;top:382.19px;letter-spacing:-0.415px;">России от</span>
<span class="t m" style="left:702px;top:395.19px;letter-spacing:-0.08px;">18.05.2022 г. №</span>
<span class="t m" style="left:702px;top:408.19px;letter-spacing:-0.164px;">378/пр</span>
<span class="t m" style="left:802px;top:343.19px;">ШТ.</span>
<div class="a " style="left:17px;top:424px;width:798px;height:1px;background:#a0a0a0;"></div>
<span class="t m" style="left:20.899999999999977px;top:424.19px;letter-spacing:-0.183px;">20.5.02.08-0012</span>
<div class="a " style="left:201px;top:425px;width:51px;height:13px;background:#ffc38a;"></div>
<span class="t m" style="left:201.29999999999995px;top:424.19px;letter-spacing:-0.11px;">КОРОБКА</span>
<span class="t m" style="left:255.5px;top:424.19px;letter-spacing:0.18px;">ТЕЛЕФОННАЯ</span>
<div class="a " style="left:337px;top:425px;width:126px;height:13px;background:#ffc38a;"></div>
<span class="t m" style="left:337.5px;top:424.19px;letter-spacing:0.002px;">РАСПРЕДЕЛИТЕЛЬНАЯ</span>
<span class="t m" style="left:467px;top:424.19px;letter-spacing:0.317px;">КР200/2</span>
<span class="t m" style="left:702px;top:424.19px;letter-spacing:-0.436px;">ФСБЦ-2022,</span>
<span class="t m" style="left:702px;top:437.19px;letter-spacing:-0.168px;">20.5.02.08-0012,</span>
<span class="t m" style="left:702px;top:450.19px;letter-spacing:0.101px;">приказ Минстроя</span>
<span class="t m" style="left:702px;top:463.19px;letter-spacing:-0.415px;">России от</span>
<span class="t m" style="left:702px;top:476.19px;letter-spacing:-0.08px;">18.05.2022 г. №</span>
<span class="t m" style="left:702px;top:489.19px;letter-spacing:-0.164px;">378/пр</span>
<span class="t m" style="left:802px;top:424.19px;">ШТ.</span>
<div class="a " style="left:17px;top:20px;width:1px;height:467px;background:#a0a0a0;"></div>
<div class="a " style="left:100px;top:20px;width:1px;height:467px;background:#a0a0a0;"></div>
<div class="a " style="left:200px;top:20px;width:1px;height:467px;background:#a0a0a0;"></div>
<div class="a " style="left:700px;top:20px;width:1px;height:467px;background:#a0a0a0;"></div>
<div class="a " style="left:800px;top:20px;width:1px;height:467px;background:#a0a0a0;"></div>
</div>
<div class="a " style="left:1435px;top:329px;width:17px;height:524px;background:#f8f8f8;"></div>
<div class="a " style="left:1435px;top:330px;width:17px;height:16px;background:#f0f0f0;border:1px solid;border-color:#fff #696969 #696969 #fff;box-shadow:inset -1px -1px 0 #a0a0a0;"></div>
<div class="a " style="left:1435px;top:836px;width:17px;height:17px;background:#f0f0f0;border:1px solid;border-color:#fff #696969 #696969 #fff;box-shadow:inset -1px -1px 0 #a0a0a0;"></div>
<div class="a " style="left:1435px;top:346px;width:17px;height:246px;background:#f0f0f0;border:1px solid;border-color:#fff #696969 #696969 #fff;box-shadow:inset -1px -1px 0 #a0a0a0;"></div>
<svg style="left:1439.5px;top:336px" width="8" height="4"><path d="M0 4h8l-4-4z" fill="#000"/></svg>
<svg style="left:1439.5px;top:842px" width="8" height="4"><path d="M0 0h8l-4 4z" fill="#000"/></svg>
<div class="a " style="left:621px;top:853px;width:831px;height:17px;background:#f8f8f8;"></div>
<div class="a " style="left:1435px;top:853px;width:17px;height:17px;background:#f0f0f0;"></div>
<div class="a " style="left:621px;top:853px;width:17px;height:17px;background:#f0f0f0;border:1px solid;border-color:#fff #696969 #696969 #fff;box-shadow:inset -1px -1px 0 #a0a0a0;"></div>
<div class="a " style="left:1418px;top:853px;width:17px;height:17px;background:#f0f0f0;border:1px solid;border-color:#fff #696969 #696969 #fff;box-shadow:inset -1px -1px 0 #a0a0a0;"></div>
<div class="a " style="left:638px;top:853px;width:654px;height:17px;background:#f0f0f0;border:1px solid;border-color:#fff #696969 #696969 #fff;box-shadow:inset -1px -1px 0 #a0a0a0;"></div>
<svg style="left:627px;top:857.5px" width="4" height="8"><path d="M4 0v8l-4-4z" fill="#000"/></svg>
<svg style="left:1425px;top:857.5px" width="4" height="8"><path d="M0 0v8l4-4z" fill="#000"/></svg>
<div class="a " style="left:364px;top:876px;width:1093px;height:22px;border:1px solid #a0a0a0;"></div>
<div class="a " style="left:363px;top:899px;width:1096px;height:1px;background:#a0a0a0;"></div>
<div class="a " style="left:362px;top:900px;width:1098px;height:1px;background:#fff;"></div>
<svg style="left:730.8px;top:884px" width="10" height="5"><path d="M0 5h9.6l-4.8-5z" fill="#000"/></svg>
<span class="t m" style="left:749.5px;top:880.19px;letter-spacing:0.07px;">Показать ресурсы и состав работ</span>
<div class="a " style="left:1296px;top:881px;width:13px;height:13px;background:#fff;border:1px solid;border-color:#a0a0a0 #fff #fff #a0a0a0;box-shadow:inset 1px 1px 0 #696969,inset -1px -1px 0 #e3e3e3;"></div>
<svg style="left:1299px;top:884px" width="8" height="8"><path d="M0.5 3L3 5.5L7.5 1" stroke="#000" stroke-width="1.8" fill="none"/></svg>
<span class="t m" style="left:1312.6px;top:880.19px;letter-spacing:-0.02px;">Подсвечивать в найденном</span>
<div class="a " style="left:372px;top:907px;width:223px;height:29px;background:#f0f0f0;border:1px solid;border-color:#fff #696969 #696969 #fff;box-shadow:inset -1px -1px 0 #a0a0a0;"></div>
<span class="t m" style="left:415.3px;top:913.19px;letter-spacing:0.029px;">Очистить критерии поиска</span>
<div class="a " style="left:1286px;top:907px;width:84px;height:29px;background:#f0f0f0;border:1px solid;border-color:#fff #696969 #696969 #fff;box-shadow:inset -1px -1px 0 #a0a0a0;"></div>
<span class="t m d" style="left:1304.6px;top:913.19px;color:#a0a0a0;letter-spacing:0.007px;">Вставить</span>
<div class="a " style="left:1372px;top:907px;width:84px;height:29px;background:#f0f0f0;border:1px solid;border-color:#fff #696969 #696969 #fff;box-shadow:inset -1px -1px 0 #a0a0a0;"></div>
<span class="t m" style="left:1392.9px;top:913.19px;letter-spacing:0.132px;">Закрыть</span>
<svg style="left:372px;top:278px" width="16" height="14" viewBox="0 0 16 14"><path d="M8.5 0.8C13 2 14.5 7 12 10.5C9.5 13.5 5.5 13 3.5 10.8" fill="none" stroke="#9aa8ac" stroke-width="1.6"/><path d="M0.6 12.6L3.6 9.8" stroke="#c87828" stroke-width="1.8"/><path d="M4.5 3.2L14 12.4" stroke="#d08030" stroke-width="1.6"/><path d="M3 3.6L6 1.2L8 3L5 5.4z" fill="#505458"/></svg>
<svg style="left:481px;top:283px" width="17" height="8" viewBox="0 0 17 8"><g fill="#f07810" stroke="#d05c00" stroke-width=".5"><rect x="5.5" y="0.3" width="5.5" height="2.2" rx="1"/><rect x="2.8" y="2.8" width="5.3" height="2.2" rx="1"/><rect x="8.6" y="2.8" width="5.3" height="2.2" rx="1"/><rect x="0.3" y="5.3" width="5.2" height="2.2" rx="1"/><rect x="5.9" y="5.3" width="5.2" height="2.2" rx="1"/><rect x="11.5" y="5.3" width="5.2" height="2.2" rx="1"/></g></svg>
<svg style="left:603px;top:282px" width="17" height="10" viewBox="0 0 17 10"><path d="M0.5 1.5L10 0.5L10.5 6H1z" fill="#2a78e8"/><path d="M10.5 1.5h3l2.8 2.6V6.5h-5.8z" fill="#f09020"/><rect x="12" y="2.3" width="2" height="1.6" fill="#e8f4ff"/><rect x="1" y="6" width="15.3" height="1" fill="#1c50a0"/><circle cx="4" cy="7.6" r="1.5" fill="#111"/><circle cx="13" cy="7.6" r="1.5" fill="#111"/><rect x="1" y="9.2" width="15" height=".8" fill="#a8a8a8"/></svg>
<svg style="left:777px;top:278px" width="15" height="15" viewBox="0 0 15 15"><path d="M5.500 6.800H11.300L11.600 8.300L12.900 9.900L11.800 10.500L11.500 12.300L9.300 12.700L9 14.800H5.200L5.600 11.500z" fill="#e0a074"/><path d="M2.300 6.800H6.300L6 9L6.600 11.300L4.600 11.600L2.800 9.600z" fill="#2a1810"/><path d="M8.300 8.100H11.600" stroke="#201008" stroke-width="1.100"/><path d="M0.800 6.400C0.800 2.600 3.800 0.300 7.300 0.600C10.300 0.900 12.300 3 12.500 5.600L14.600 6.900L13.800 7.400L0.800 7.200z" fill="#f07010"/><path d="M3.500 2.200C5 0.900 8.500 0.800 10 2.300L9 4.500H4z" fill="#ff9c38"/></svg>
<svg style="left:931px;top:277px" width="17" height="16" viewBox="0 0 17 16"><rect x="0.8" y="0.3" width="12.5" height="6.6" rx="1.6" fill="#2a8cf0"/><rect x="1.5" y="0.8" width="11" height="2.4" rx="1" fill="#58b0ff"/><path d="M13.3 3.5H15.6V9.4H7.4V10" fill="none" stroke="#9a9a9a" stroke-width="1.2"/><rect x="5" y="9.6" width="4.8" height="6" fill="#e81818"/></svg>
</body></html>
